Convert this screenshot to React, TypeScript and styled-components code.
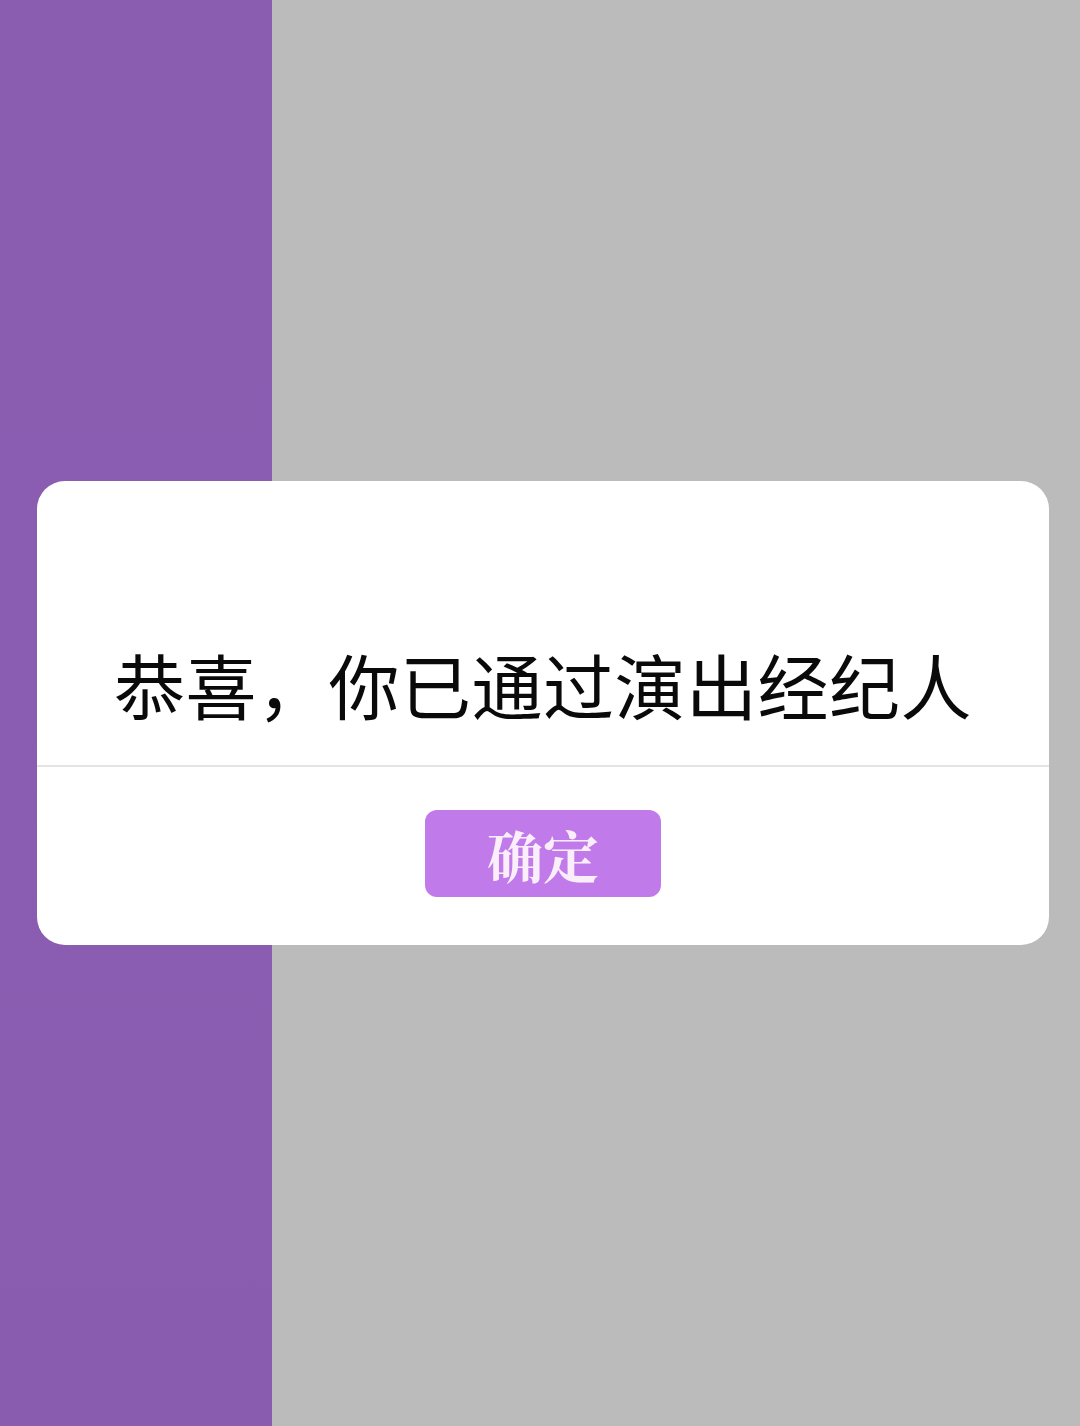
import styled, { createGlobalStyle } from "styled-components";

const GlobalStyle = createGlobalStyle`
  html, body {
    margin: 0;
    padding: 0;
    height: 100%;
  }
  #root {
    height: 100%;
  }
`;

const Screen = styled.div`
  display: flex;
  width: 100vw;
  height: 100vh;
  background: #bbbbbb;
  overflow: hidden;
`;

const SidePanel = styled.div`
  width: 272px;
  flex-shrink: 0;
  background: linear-gradient(180deg, #8a5db1 0%, #8b5db2 50%, #8a5cb0 100%);
`;

const Content = styled.div`
  flex: 1;
  background: #bbbbbb;
`;

const Overlay = styled.div`
  position: fixed;
  inset: 0;
  display: flex;
  align-items: center;
  justify-content: center;
  padding-left: 6px;
`;

const Dialog = styled.div`
  width: 1012px;
  background: #ffffff;
  border-radius: 28px;
  display: flex;
  flex-direction: column;
  overflow: hidden;
`;

const Message = styled.div`
  padding: 160px 0 39px;
  text-align: center;
  font-family: "Noto Sans CJK SC", "Noto Sans", sans-serif;
  font-size: 71px;
  font-weight: 400;
  line-height: 85px;
  color: #0a0a0a;
  letter-spacing: 0.5px;
`;

const Divider = styled.div`
  height: 2px;
  background: #e4e4e4;
`;

const Actions = styled.div`
  display: flex;
  justify-content: center;
  padding: 43px 0 48px;
`;

const ConfirmButton = styled.button`
  width: 236px;
  height: 87px;
  border: none;
  border-radius: 12px;
  background: #c07ae9;
  color: #fbeefb;
  font-family: "Noto Serif CJK SC", "Noto Sans CJK SC", serif;
  font-size: 56px;
  font-weight: 700;
  line-height: 1;
  padding: 0;
  cursor: pointer;
`;

export default function App() {
  return (
    <>
      <GlobalStyle />
      <Screen>
        <SidePanel />
        <Content />
      </Screen>
      <Overlay>
        <Dialog>
          <Message>恭喜，你已通过演出经纪人</Message>
          <Divider />
          <Actions>
            <ConfirmButton>确定</ConfirmButton>
          </Actions>
        </Dialog>
      </Overlay>
    </>
  );
}
